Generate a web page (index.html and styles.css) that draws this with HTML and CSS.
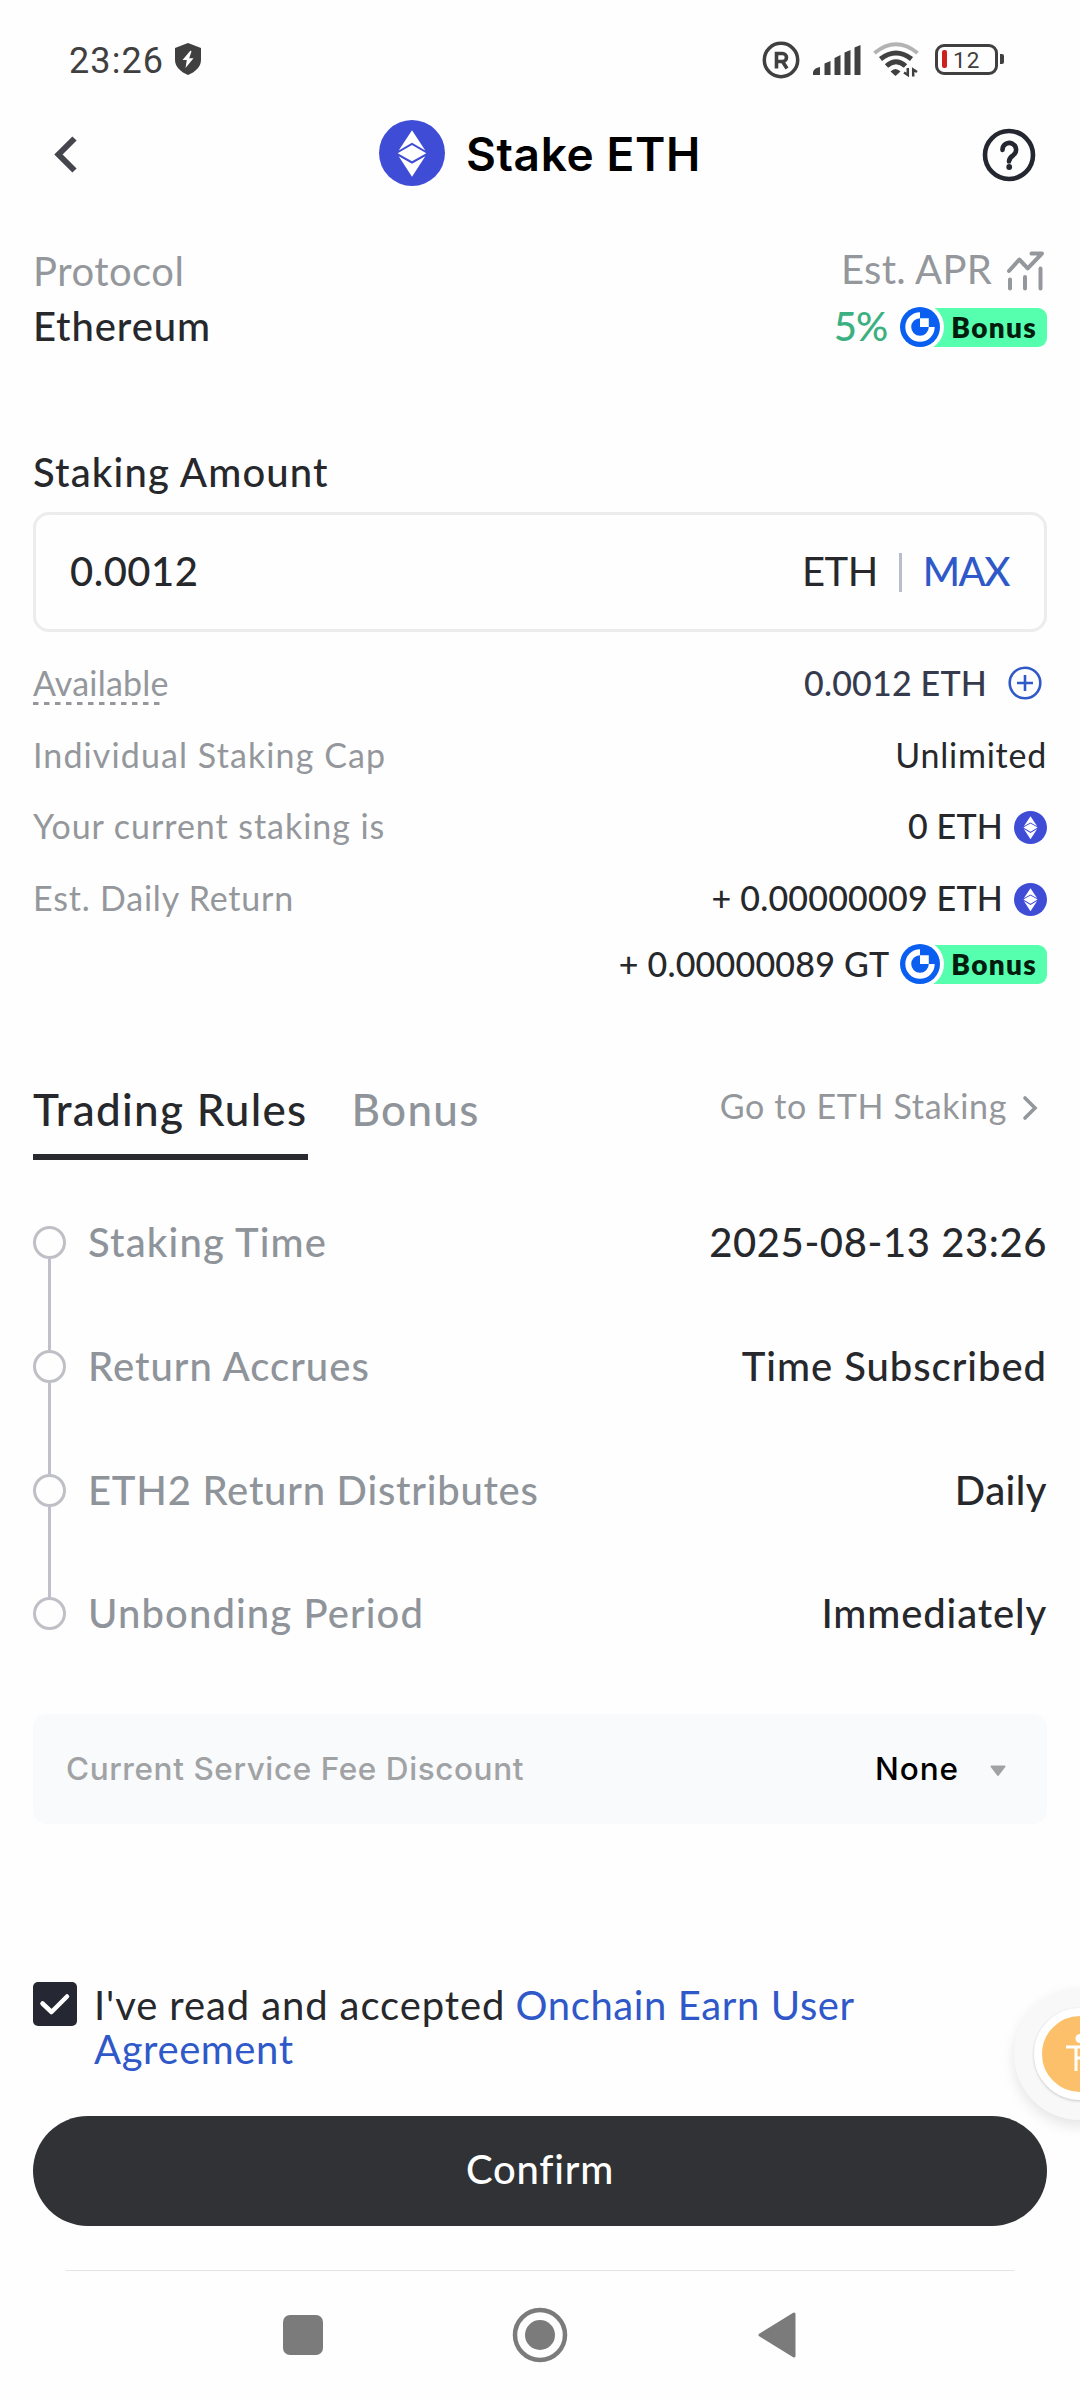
FILE: index.html
```html
<!DOCTYPE html>
<html lang="en">
<head>
<meta charset="utf-8">
<title>Stake ETH</title>
<link rel="stylesheet" href="styles.css">
</head>
<body>
<svg class="defs" width="0" height="0">
  <symbol id="eth" viewBox="0 0 66 66">
    <circle cx="33" cy="33" r="33" fill="#3f4dd6"/>
    <path fill="#fff" d="M33 10.3 46.3 30.6 33 22.8 19.7 30.6ZM18.7 33.2 33 25.1 47.3 33.2 33 41.3ZM19.7 36.2 33 43.8 46.3 36.2 33 56.7Z"/>
  </symbol>
  <symbol id="gt" viewBox="0 0 48 48">
    <circle cx="24" cy="24" r="24" fill="#fff"/>
    <circle cx="24" cy="24" r="20" fill="#0a5ff0"/>
    <path fill="#fff" d="M24 9.3A14.7 14.7 0 1 0 38.7 24H32.8A8.8 8.8 0 1 1 24 15.2ZM24 15.2h8.8V24H24Z"/>
  </symbol>
</svg>

<div class="status">
  <span class="clock">23:26</span>
  <svg class="shield" width="28" height="32" viewBox="0 0 28 32"><path d="M14 0 27 5V17C27 24 21 29 14 32 7 29 1 24 1 17V5Z" fill="#404040"/><path d="M16.500 7.500 8.500 17h4.300L11.500 25 19.500 15.200h-4.300L17.500 8.500Z" fill="#fff"/></svg>
  <div class="status-icons">
    <svg width="38" height="38" viewBox="0 0 38 38" fill="none" stroke="#404040"><circle cx="19" cy="19" r="16.700" stroke-width="3.500"/><path d="M14.500 27.500V12.500H20.500a4 4 0 0 1 0 8H14.500M20.500 20.500 25 27.500" stroke-width="3.600"/></svg>
    <svg class="signal" width="48" height="30" viewBox="0 0 48 30" fill="#404040"><path d="M0 30V27Q1 23 7 22V30ZM11.500 30V18.500L17.500 16V30ZM21.500 30V13L27.500 10V30ZM31.500 30V7.500L37.500 5V30ZM41.500 30V2.500L47.500 0V30Z"/></svg>
    <svg class="wifi" width="48" height="36" viewBox="0 0 48 36" fill="none" stroke="#404040" stroke-width="5"><path d="M1.500 11Q23 -6.500 44.500 11" stroke="#b3b3b3" stroke-width="4"/><path d="M7.500 17Q23 5 38.500 17"/><path d="M13.500 24Q23 15.500 32.500 24"/><path d="M17.500 29.500Q22.500 24.500 27.500 29.500L22.500 34Z" fill="#404040" stroke="none"/><path d="M31 30.500 34.800 33V26M44 30 40.200 27.500V34.500" stroke-width="2.500"/></svg>
    <div class="battery"><i class="level"></i><span>12</span></div><i class="nub"></i>
  </div>
</div>

<header class="header">
  <svg class="back" width="26" height="40" viewBox="0 0 26 40" fill="none" stroke="#45464d" stroke-width="6"><path d="M22.500 3.500 6.500 19.500 22.500 35.500"/></svg>
  <div class="title"><svg class="coin" width="66" height="66"><use href="#eth"/></svg><h1>Stake ETH</h1></div>
  <svg class="help" width="54" height="54" viewBox="0 0 54 54" fill="none" stroke="#252730" stroke-width="4.600"><circle cx="27" cy="27" r="24"/><path d="M20.500 22a6.800 6.800 0 1 1 10.800 5.200Q27 30 27 33.500" stroke-linecap="round"/><circle cx="27.200" cy="39" r="2.900" fill="#252730" stroke="none"/></svg>
</header>

<main class="main">
  <section class="summary">
    <div class="protocol"><div class="muted t-protocol">Protocol</div><div class="medium t-ethereum">Ethereum</div></div>
    <div class="apr">
      <div class="apr-label muted"><span>Est. APR</span><svg width="40" height="42" viewBox="-1 0 40 42" fill="none" stroke="#94979b" stroke-width="4" stroke-linecap="round" stroke-linejoin="round"><path d="M2 21 12.300 9.500 20.700 18.300 34.500 4M24.500 3.500H35M3 29.500V38.500M18 27V38.500M33.500 18.500V38.500"/></svg></div>
      <div class="apr-value"><span class="rate">5%</span><span class="bonus"><svg width="48" height="48"><use href="#gt"/></svg><b>Bonus</b></span></div>
    </div>
  </section>

  <h2 class="amount-label">Staking Amount</h2>
  <div class="field"><span class="amount">0.0012</span><span class="unit">ETH</span><i class="divider"></i><span class="max">MAX</span></div>

  <dl class="stats">
    <div class="stat"><dt class="available"><span>Available</span><svg width="128" height="3"><path d="M0 1.500H128" stroke="#94979b" stroke-width="3" stroke-dasharray="5.500 5.500"/></svg></dt><dd class="balance"><span>0.0012 ETH</span><svg width="34" height="34" viewBox="0 0 34 34" fill="none" stroke="#2f58c8" stroke-width="2.600"><circle cx="17" cy="17" r="15.300"/><path d="M9 17H25M17 9V25"/></svg></dd></div>
    <div class="stat"><dt class="t-cap">Individual Staking Cap</dt><dd class="t-unlimited">Unlimited</dd></div>
    <div class="stat"><dt class="t-current">Your current staking is</dt><dd><span class="t-zero">0 ETH</span><svg width="33" height="33"><use href="#eth"/></svg></dd></div>
    <div class="stat"><dt class="t-daily">Est. Daily Return</dt><dd><span class="t-return">+ 0.00000009 ETH</span><svg width="33" height="33"><use href="#eth"/></svg></dd></div>
    <div class="stat extra"><dd><span class="t-gt">+ 0.00000089 GT</span><span class="bonus"><svg width="48" height="48"><use href="#gt"/></svg><b>Bonus</b></span></dd></div>
  </dl>

  <nav class="tabs">
    <span class="tab active">Trading Rules</span><span class="tab">Bonus</span>
    <span class="go"><span>Go to ETH Staking</span><svg width="16" height="26" viewBox="0 0 16 26" fill="none" stroke="#94979b" stroke-width="3.600" stroke-linecap="round"><path d="M3 3 13 13 3 23"/></svg></span>
  </nav>

  <ol class="timeline">
    <li><span class="mark"></span><span class="name t-time">Staking Time</span><span class="value t-date">2025-08-13 23:26</span></li>
    <li><span class="mark"></span><span class="name t-accrues">Return Accrues</span><span class="value t-sub">Time Subscribed</span></li>
    <li><span class="mark"></span><span class="name t-dist">ETH2 Return Distributes</span><span class="value t-dly">Daily</span></li>
    <li><span class="mark"></span><span class="name t-unbond">Unbonding Period</span><span class="value t-imm">Immediately</span></li>
  </ol>

  <div class="discount"><span class="fee">Current Service Fee Discount</span><span class="none">None</span><svg width="18" height="12" viewBox="0 0 18 12"><path d="M2.500 1.500H15.500L9 10Z" fill="#a0a2a4" stroke="#a0a2a4" stroke-width="2" stroke-linejoin="round"/></svg></div>

  <div class="agree">
    <svg width="44" height="44" viewBox="0 0 44 44"><rect width="44" height="44" rx="5" fill="#252733"/><path d="M9.500 21.500 18.500 30 34 14.500" fill="none" stroke="#fff" stroke-width="4.500" stroke-linecap="round" stroke-linejoin="round"/></svg>
    <p><span class="t-read">I've read and accepted</span> <a class="t-onchain">Onchain Earn User</a><br><a class="t-agreement">Agreement</a></p>
  </div>
  <button class="confirm">Confirm</button>
</main>

<footer class="navbar">
  <svg width="60" height="60" viewBox="0 0 60 60" fill="#7b7b7b"><rect x="10" y="10" width="40" height="40" rx="7"/></svg>
  <svg width="60" height="60" viewBox="0 0 60 60" fill="#7b7b7b"><circle cx="30" cy="30" r="25" fill="none" stroke="#7b7b7b" stroke-width="4.500"/><circle cx="30" cy="30" r="15"/></svg>
  <svg width="60" height="60" viewBox="0 0 60 60" fill="#7b7b7b" stroke="#7b7b7b" stroke-width="3" stroke-linejoin="round"><path d="M13 30 47 9V51Z"/></svg>
</footer>

<div class="dock"><div class="assist"><div class="assist-inner"><svg width="30" height="42" viewBox="0 0 30 42"><circle cx="15" cy="5.500" r="4.500" fill="#fff"/><path d="M1 14H29M11 14V38M19 14V38M11 25H19" fill="none" stroke="#fff" stroke-width="3"/></svg></div></div></div>
</body>
</html>
```
FILE: styles.css
```css
*, ::before, ::after { box-sizing: border-box; }
body {
  position: relative;
  width: 1080px;
  height: 2400px;
  margin: 0;
  overflow: hidden;
  background: #fefefe;
  color: #26282c;
  font: 400 40px/44px Lato, sans-serif;
}
svg { display: block; flex: none; }
.defs { position: absolute; }
h1, h2, p, dl, dd, ol { margin: 0; padding: 0; font-weight: inherit; font-size: inherit; }
i { display: block; }

.status { display: flex; align-items: center; height: 120px; padding: 0 76px 0 69px; color: #404040; }
.clock { padding-top: 1px; font: 400 36px/44px Roboto, sans-serif; letter-spacing: 1.1px; }
.shield { margin-left: 10px; margin-bottom: 3px; }
.status-icons { display: flex; align-items: center; margin-left: auto; }
.status-icons .signal { margin-left: 13px; }
.status-icons .wifi { margin-left: 12px; }
.battery {
  display: flex;
  align-items: center;
  width: 63px;
  height: 31px;
  margin: 0 2px 2px 14px;
  padding-left: 4px;
  border: 3.5px solid #404040;
  border-radius: 9px;
  font: 400 22.5px/24px Roboto, sans-serif;
  letter-spacing: 1px;
}
.battery span { padding-top: 2px; }
.level { width: 5px; height: 18px; margin-right: 6px; border-radius: 2px; background: #cf2020; }
.nub { width: 4px; height: 10px; margin-bottom: 2px; border-radius: 0 2px 2px 0; background: #404040; }

.header { display: grid; grid-template-columns: 1fr auto 1fr; align-items: center; height: 64px; padding: 0 44px 0 52px; }
.title { display: flex; align-items: center; gap: 21px; margin-right: 8px; }
.coin { margin-bottom: 2px; }
h1 { color: #000; font: 600 46px/60px Inter, sans-serif; font-optical-sizing: none; letter-spacing: .65px; white-space: nowrap; }
.help { justify-self: end; margin-top: 1px; }
.back { margin-top: 1px; }

.main { padding: 0 33px; }
.muted { color: #94979b; }
.medium { font-weight: 500; }
.summary { display: flex; justify-content: space-between; padding-top: 58px; line-height: 55px; }
.protocol { padding-top: 2px; }
.t-protocol { letter-spacing: .5px; }
.t-ethereum { letter-spacing: .9px; }
.apr-label { display: flex; align-items: center; justify-content: flex-end; gap: 14px; letter-spacing: .25px; }
.apr-label svg { margin: 3px 1px 0 0; }
.apr-value { display: flex; align-items: center; height: 55px; margin-top: 2px; color: #3bb080; font-weight: 500; }
.rate { letter-spacing: -1px; margin-right: 13px; }
.bonus { display: flex; align-items: center; margin: 1px 0 0 -4px; height: 39px; }
.bonus svg { position: relative; z-index: 1; margin-right: -24px; }
.bonus b {
  height: 39px;
  padding: 0 10px 0 31px;
  border-radius: 9px;
  background: #55ffae;
  color: #021c0e;
  font: 800 28px/38px Lato, sans-serif;
  letter-spacing: 1.3px;
}

.amount-label { margin-top: 96px; font-weight: 500; letter-spacing: 1.15px; }
.field {
  display: flex;
  align-items: center;
  height: 120px;
  margin-top: 18px;
  padding: 0 35px 3px 34px;
  border: 3px solid #ececec;
  border-radius: 16px;
}
.amount { flex: 1; font-weight: 500; letter-spacing: .5px; }
.unit { letter-spacing: -.5px; }
.divider { width: 3px; height: 39px; margin: 3px 21px 0; background: #b8bccb; }
.max { color: #2f58c8; font-weight: 500; letter-spacing: -1.5px; }

.stats { margin-top: 15px; font-size: 34px; }
.stat { display: flex; align-items: center; justify-content: space-between; height: 71.6px; }
.stat dt { color: #94979b; }
.stat dd { display: flex; align-items: center; gap: 11px; font-weight: 500; }
.stat dd svg { margin-top: 4px; }
.available { position: relative; letter-spacing: .2px; }
.available svg { position: absolute; left: 0; bottom: 0; }
.stat .balance { gap: 21px; padding-right: 5px; color: #363a4d; letter-spacing: .2px; }
.stat .balance svg { margin-top: 0; }
.t-cap { padding-top: 1px; letter-spacing: 1.1px; }
.stat .t-unlimited { padding-top: 1px; font-weight: 400; letter-spacing: .77px; }
.t-current { letter-spacing: .95px; }
.t-daily { letter-spacing: .8px; }
.t-zero, .t-return { letter-spacing: .2px; }
.t-gt { letter-spacing: .22px; }
.extra { justify-content: flex-end; height: 61px; }
.stat .bonus svg { margin-top: 0; }

.tabs { display: flex; align-items: flex-start; gap: 44px; margin-top: 90px; height: 76px; }
.tab { height: 76px; color: #8f949a; font-size: 44px; line-height: 50px; font-weight: 500; letter-spacing: 1.3px; }
.active { border-bottom: 6px solid #282a30; color: #26282c; }
.go { display: flex; align-items: center; gap: 15px; margin-left: auto; padding-right: 9px; color: #94979b; font-size: 34px; line-height: 43px; letter-spacing: .67px; }
.go svg { margin-top: 5px; }

.timeline { margin-top: 59px; list-style: none; font-weight: 500; }
.timeline li { display: flex; height: 123.7px; }
.timeline li:last-child { height: 44px; }
.mark { display: flex; flex-direction: column; align-items: center; width: 33px; margin: 7px 22px 0 0; height: 123.7px; }
.mark::before { content: ""; flex: none; width: 33px; height: 33px; border: 3px solid #bfc0c6; border-radius: 50%; }
.mark::after { content: ""; flex: 1; width: 3px; background: #c0c0ca; }
li:last-child .mark::after { display: none; }
.name { padding-top: 1px; color: #8f949a; }
.value { margin-left: auto; padding-top: 1px; }
.t-time { letter-spacing: 1.15px; }
.t-accrues { letter-spacing: 1px; }
.t-dist { letter-spacing: .75px; }
.t-unbond { letter-spacing: 1.1px; }
.t-date { letter-spacing: .59px; }
.t-sub { letter-spacing: .95px; }
.t-dly { letter-spacing: .46px; }
.t-imm { letter-spacing: .86px; }

.discount {
  display: flex;
  align-items: center;
  height: 110px;
  margin-top: 79.3px;
  padding: 0 40px 0 33px;
  border-radius: 14px;
  background: #f8fafc;
  color: #a0a2a4;
  font: 500 31.5px/40px Inter, sans-serif;
  font-optical-sizing: none;
}
.fee { letter-spacing: .58px; }
.none { margin: 0 30px 0 auto; color: #000; letter-spacing: .9px; }
.discount svg { margin-top: 4px; }

.agree { display: flex; gap: 17px; margin-top: 158px; }
.agree a { color: #2f58c8; }
.agree p { padding-top: 1px; white-space: nowrap; }
.t-read { letter-spacing: .9px; }
.t-onchain { letter-spacing: .62px; }
.t-agreement { letter-spacing: .6px; }
.confirm {
  display: block;
  width: 100%;
  height: 110px;
  margin-top: 45px;
  padding: 0 0 3px;
  border: 0;
  border-radius: 55px;
  background: #303235;
  color: #fff;
  font: 500 40px/44px Lato, sans-serif;
  letter-spacing: .8px;
  font-variant-ligatures: none;
}

.navbar { display: flex; align-items: center; justify-content: center; gap: 177px; height: 129px; margin: 44px 66px 0; padding-right: 1px; border-top: 1px solid #e4e4e4; }

/* Floating accessibility button, docked half off the right edge */
.dock { position: absolute; top: 1960px; right: 0; width: 90px; height: 190px; padding: 28px 0 0 24px; overflow: hidden; }
.assist {
  display: grid;
  place-items: center;
  width: 132px;
  height: 132px;
  border-radius: 50%;
  background: #f8f8f8;
  box-shadow: 0 6px 14px rgba(0, 0, 0, .1);
}
.assist-inner {
  display: grid;
  place-items: center;
  width: 92px;
  height: 92px;
  border: 8px solid #fff;
  border-radius: 50%;
  background: #fcc06a;
  box-shadow: 0 1px 3px rgba(0, 0, 0, .2);
}
```
